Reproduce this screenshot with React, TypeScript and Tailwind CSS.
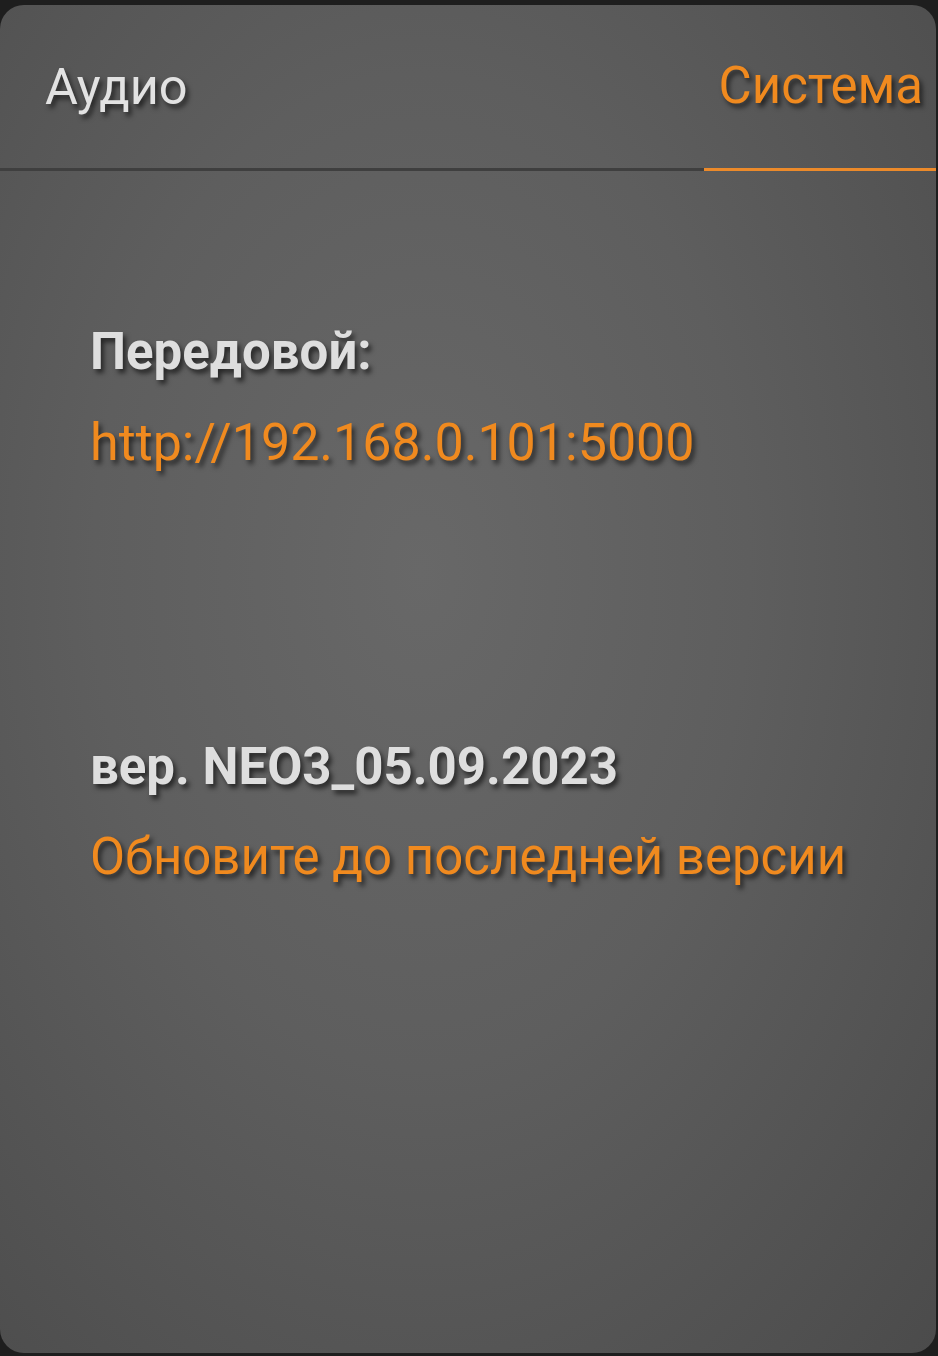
import React from 'react';

const shadow = '[text-shadow:3px_4px_5px_rgba(0,0,0,0.6)]';

function Tabs() {
  return (
    <div className="flex h-[166px] items-stretch">
      <div className="flex flex-1 flex-col">
        <div className={`flex flex-1 items-center pl-[45px] text-[50.5px] text-[#e2e2e2] ${shadow}`}>Аудио</div>
        <div className="h-[3px] bg-[#3f3f3f]" />
      </div>
      <div className="flex w-[232px] flex-col">
        <div className={`flex flex-1 items-center justify-end pr-[13px] text-[51px] text-[#f08a1f] ${shadow}`}>Система</div>
        <div className="h-[3px] bg-[#ec8a2a]" />
      </div>
    </div>
  );
}

export default function App() {
  return (
    <div className="h-[1356px] w-[938px] bg-[#1e1e1e] pt-[5px] pb-[3px] font-['Roboto',sans-serif]">
      <div className="flex h-full w-[936px] flex-col overflow-hidden rounded-[24px] bg-[radial-gradient(ellipse_at_45%_42%,#686868_0%,#5e5e5e_45%,#4b4b4b_100%)]">
        <Tabs />
        <div className="flex flex-col pl-[90px] pt-[151px]">
          <div className={`text-[51px] font-bold leading-[60px] text-[#dedede] ${shadow}`}>Передовой:</div>
          <div className={`mt-[31px] text-[52px] leading-[60px] text-[#f08a1f] ${shadow}`}>http://192.168.0.101:5000</div>
          <div className={`mt-[264px] text-[51px] font-bold leading-[60px] text-[#dedede] ${shadow}`}>вер. NEO3_05.09.2023</div>
          <div className={`mt-[30px] text-[51px] leading-[60px] text-[#f08a1f] ${shadow}`}>Обновите до последней версии</div>
        </div>
      </div>
    </div>
  );
}
